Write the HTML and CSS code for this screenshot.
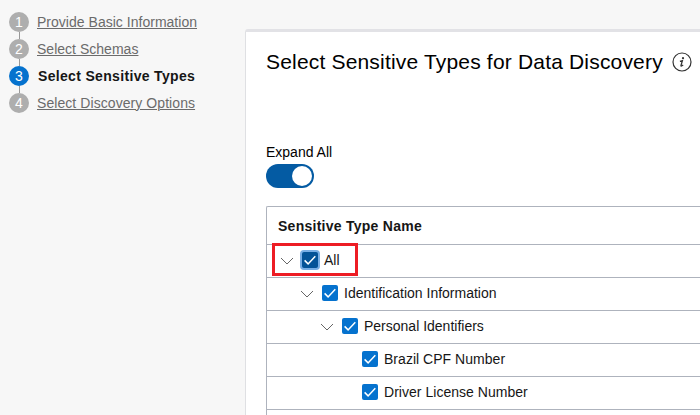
FILE: index.html
```
<!DOCTYPE html>
<html lang="en">
<head>
<meta charset="utf-8">
<title>Select Sensitive Types</title>
<link rel="stylesheet" href="styles.css">
</head>
<body>
<svg class="defs" width="0" height="0">
  <symbol id="chevron" viewBox="0 0 14 8"><path d="M1 1l6 6 6-6" fill="none" stroke="#666" stroke-width="1"/></symbol>
  <symbol id="check" viewBox="0 0 16 16"><path d="M2.6 8.4l3.5 3.5 7.2-7.6" fill="none" stroke="#fff" stroke-width="1.5"/></symbol>
</svg>
<div class="layout">
  <nav class="train">
    <ol class="steps">
      <li class="step"><span class="num">1</span><a class="label">Provide Basic Information</a></li>
      <li class="step"><span class="num">2</span><a class="label">Select Schemas</a></li>
      <li class="step current"><span class="num">3</span><span class="label">Select Sensitive Types</span></li>
      <li class="step"><span class="num">4</span><a class="label last">Select Discovery Options</a></li>
    </ol>
  </nav>
  <main class="panel">
    <header class="heading">
      <h1>Select Sensitive Types for Data Discovery</h1>
      <svg class="info" width="20" height="20" viewBox="0 0 20 20"><circle cx="10" cy="10" r="9" fill="none" stroke="#333" stroke-width="1.2"/><circle cx="11" cy="6.2" r="1.1" fill="#333"/><path d="M7.9 9.3l2.5-.7-1.4 4.7q-.1 1 .6.7l1.6-1" fill="none" stroke="#333" stroke-width="1.3"/></svg>
    </header>
    <div class="expand">Expand All</div>
    <div class="toggle"><span class="knob"></span></div>
    <div class="table">
      <div class="row head"><span class="name">Sensitive Type Name</span></div>
      <div class="row level0"><svg class="chev"><use href="#chevron"/></svg><span class="box focus"><svg><use href="#check"/></svg></span><span class="name">All</span><span class="highlight"></span></div>
      <div class="row level1"><svg class="chev"><use href="#chevron"/></svg><span class="box"><svg><use href="#check"/></svg></span><span class="name">Identification Information</span></div>
      <div class="row level2"><svg class="chev"><use href="#chevron"/></svg><span class="box"><svg><use href="#check"/></svg></span><span class="name">Personal Identifiers</span></div>
      <div class="row level3"><span class="box"><svg><use href="#check"/></svg></span><span class="name">Brazil CPF Number</span></div>
      <div class="row level3"><span class="box"><svg><use href="#check"/></svg></span><span class="name">Driver License Number</span></div>
      <div class="row"></div>
    </div>
  </main>
</div>
</body>
</html>
```
FILE: styles.css
```
* { box-sizing: border-box; }
body { margin: 0; background: #f7f7f7; font: 14px/16px "Liberation Sans", Arial, sans-serif; color: #161616; overflow: hidden; }
.defs { position: absolute; }
.layout { display: flex; height: 415px; overflow: hidden; }
.train { flex: 0 0 245px; padding: 12px 0 0 9px; }
.steps { list-style: none; margin: 0; padding: 0; display: flex; flex-direction: column; gap: 7px; }
.step { display: flex; align-items: center; gap: 8px; height: 20px; position: relative; white-space: nowrap; }
.step:not(:last-child)::after { content: ""; position: absolute; left: 10px; top: 20px; width: 1px; height: 7px; background: #999; }
.num { width: 20px; height: 20px; border-radius: 50%; background: #aeaeae; color: #fff; text-align: center; line-height: 21px; }
.label { color: #6b6b6b; text-decoration: underline; text-decoration-thickness: 1px; text-underline-offset: 1px; letter-spacing: 0.02px; }
.last { letter-spacing: 0.07px; }
.current .num { background: #0572ce; }
.current .label { color: #161616; font-weight: bold; text-decoration: none; letter-spacing: 0.33px; margin-left: 1px; }
.panel { flex: 1; min-width: 0; margin-top: 29px; padding: 20px 0 0 20px; height: 400px; background: #fff; border-left: 1px solid #dfe0e3; border-top: 3px solid #e2e2e6; border-top-left-radius: 3px; }
.heading { display: flex; align-items: center; gap: 9px; height: 20px; }
h1 { margin: 0; font-size: 21px; line-height: 24px; font-weight: normal; letter-spacing: 0.18px; white-space: nowrap; color: #000; }
.info { flex: none; }
.expand { margin-top: 72px; color: #000; }
.toggle { display: flex; justify-content: flex-end; width: 48px; height: 24px; margin-top: 4px; padding: 2px; border-radius: 12px; background: #045ba3; }
.knob { width: 20px; height: 20px; border-radius: 50%; background: #fff; }
.table { margin-top: 18px; border-left: 1px solid #aeb3bd; border-top: 1px solid #aeb3bd; border-top-left-radius: 2px; }
.row { display: flex; align-items: center; height: 33px; padding-bottom: 2px; border-bottom: 1px solid #aeb3bd; position: relative; white-space: nowrap; }
.head { height: 38px; padding-left: 11px; padding-bottom: 0; font-weight: bold; letter-spacing: 0.26px; }
.level0 { padding-left: 13px; }
.level1 { padding-left: 33px; }
.level2 { padding-left: 53px; }
.level3 { padding-left: 95px; }
.level3 .name { letter-spacing: 0.03px; }
.chev { width: 14px; height: 8px; margin: 2px 8px 0 0; }
.box { width: 16px; height: 16px; border-radius: 2px; background: #0572ce; margin-right: 6px; }
.box svg { display: block; width: 16px; height: 16px; }
.focus { background: #045398; box-shadow: 0 0 0 2px #79aee5; }
.highlight { position: absolute; left: 5px; top: -2px; width: 86px; height: 33px; border: 3px solid #ed1c24; }
```
